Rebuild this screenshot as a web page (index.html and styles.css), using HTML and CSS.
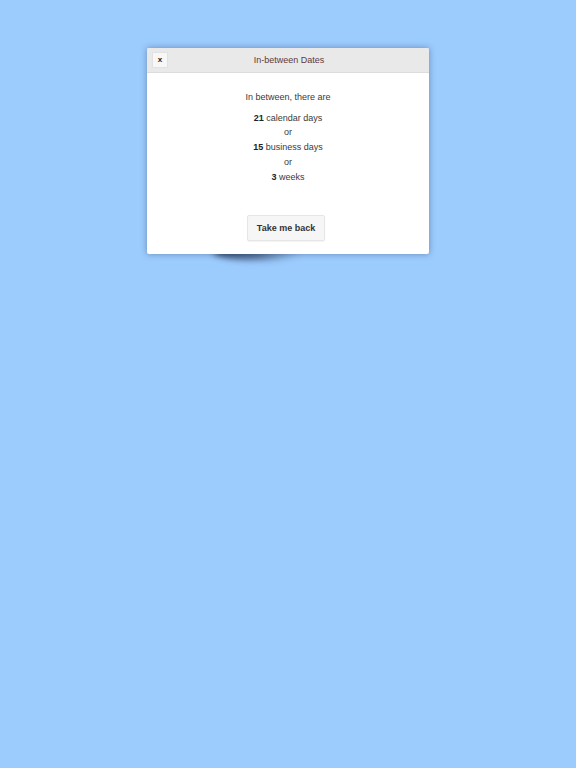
FILE: index.html
```html
<!DOCTYPE html>
<html>
<head>
<meta charset="utf-8">
<link rel="stylesheet" href="styles.css">
</head>
<body>
<div class="page">
  <div class="dialog">
    <div class="header">
      <button class="close">x</button>
      <div class="title">In-between Dates</div>
    </div>
    <div class="body">
      <p class="intro">In between, there are</p>
      <p class="line"><b>21</b> calendar days</p>
      <p class="line">or</p>
      <p class="line"><b>15</b> business days</p>
      <p class="line">or</p>
      <p class="line"><b>3</b> weeks</p>
      <button class="back">Take me back</button>
    </div>
  </div>
</div>
</body>
</html>
```
FILE: styles.css
```css
html {
  background: #9ccbfe;
}
html, body {
  margin: 0;
  padding: 0;
  font-family: "Liberation Sans", Arial, sans-serif;
}
.page {
  width: 576px;
  height: 768px;
  padding-top: 48px;
  box-sizing: border-box;
  display: flex;
  flex-direction: column;
  align-items: center;
}
.dialog {
  width: 282px;
  height: 206px;
  background: #fff;
  border-radius: 2px;
  box-shadow: 0 0 6px rgba(40, 60, 90, 0.45);
  position: relative;
  display: flex;
  flex-direction: column;
}
.dialog::after {
  content: "";
  position: absolute;
  left: 66px;
  width: 90px;
  top: 196px;
  height: 16px;
  border-radius: 50%;
  background: linear-gradient(to right, rgba(25, 40, 70, 0.85), rgba(25, 40, 70, 0.55) 50%, rgba(25, 40, 70, 0));
  filter: blur(3px);
  z-index: -1;
}
.header {
  height: 24px;
  background: #e9e9e9;
  border-bottom: 1px solid #dcdcdc;
  border-radius: 2px 2px 0 0;
  position: relative;
  display: flex;
  align-items: center;
  justify-content: center;
}
.close {
  position: absolute;
  left: 5px;
  top: 4px;
  width: 16px;
  height: 16px;
  padding: 0;
  border: 1px solid #e2e2e2;
  background: #f7f7f7;
  font-family: "Liberation Sans", Arial, sans-serif;
  font-size: 8px;
  font-weight: bold;
  color: #222;
  line-height: 14px;
}
.title {
  font-size: 9px;
  color: #5e3a3c;
  margin-left: 2px;
}
.body {
  display: flex;
  flex-direction: column;
  align-items: center;
  padding-top: 17px;
  color: #3a3a3a;
  font-size: 9px;
}
.body p {
  margin: 0;
  line-height: 14.7px;
}
.intro {
  margin-bottom: 6px !important;
}
.line b {
  color: #222;
}
.back {
  margin-top: 31px;
  width: 78px;
  height: 26px;
  border: 1px solid #e6e6e6;
  border-radius: 2px;
  background: #f6f6f6;
  box-shadow: 0 1px 1px rgba(0,0,0,0.05);
  font-family: "Liberation Sans", Arial, sans-serif;
  font-size: 9px;
  font-weight: bold;
  color: #333;
  padding: 0;
  margin-right: 4px;
}
```
